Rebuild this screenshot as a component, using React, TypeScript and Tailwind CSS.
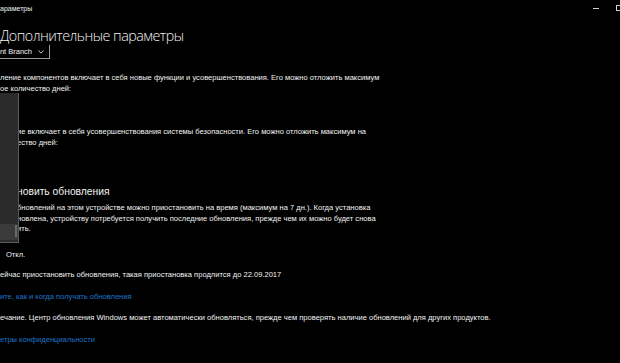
import React from "react";

const font = { fontFamily: '"Liberation Sans", Arial, sans-serif' };
const light = { fontFamily: '"Open Sans", "Noto Sans", sans-serif' };

export default function App() {
  return (
    <div
      className="relative w-[620px] h-[363px] overflow-hidden bg-black text-[#f2f2f2]"
      style={font}
    >
      {/* title bar */}
      <div className="flex h-[16px] items-center justify-between">
        <span className="text-[7px] leading-none">араметры</span>
        <div className="flex items-center gap-[17px]">
          <div className="h-[1px] w-[6px] bg-[#cfcfcf]" />
          <div className="h-[6px] w-[4px] border border-r-0 border-[#cfcfcf]" />
        </div>
      </div>

      {/* page title */}
      <div className="mt-[10px] whitespace-nowrap text-[14.3px] font-light leading-[20px] tracking-[-0.5px]" style={light}>
        Дополнительные параметры
      </div>

      {/* combobox */}
      <div className="mt-[-1px] flex h-[14px] w-[50px] items-center justify-end gap-[6px] whitespace-nowrap border-b border-r border-[#9a9a9a] pr-[5px] text-[7.5px] leading-none">
        <span>ent Branch</span>
        <svg width="6" height="4" viewBox="0 0 6 4" fill="none" className="shrink-0">
          <path d="M0.5 0.5 L3 3.2 L5.5 0.5" stroke="#d8d8d8" strokeWidth="0.9" />
        </svg>
      </div>

      <div className="whitespace-nowrap text-[7.55px] leading-[10.7px]">
        <p className="mt-[14px]">
          ление компонентов включает в себя новые функции и усовершенствования. Его можно отложить максимум
          <br />
          ое количество дней:
        </p>
        <p className="mt-[33px] pl-[17px]">
          ие включает в себя усовершенствования системы безопасности. Его можно отложить максимум на
          <br />
          ество дней:
        </p>
      </div>

      <div className="mt-[36px] whitespace-nowrap pl-[17px] text-[10.3px] leading-[13px]">новить обновления</div>

      <p className="mt-[5px] whitespace-nowrap pl-[17px] text-[7.55px] leading-[10.7px]">
        бновлений на этом устройстве можно приостановить на время (максимум на 7 дн.). Когда установка
        <br />
        новлена, устройству потребуется получить последние обновления, прежде чем их можно будет снова
        <br />
        ить.
      </p>

      <div className="mt-[15px] pl-[6px] text-[7.55px] leading-[10.7px]">Откл.</div>

      <div className="mt-[9px] whitespace-nowrap text-[7.55px] leading-[10.7px]">
        ейчас приостановить обновления, такая приостановка продлится до 22.09.2017
      </div>

      <div className="mt-[12px] whitespace-nowrap text-[7.55px] leading-[10.7px] text-[#1f74c8]">
        ите, как и когда получать обновления
      </div>

      <div className="mt-[10px] whitespace-nowrap text-[7.55px] leading-[10.7px]">
        ечание. Центр обновления Windows может автоматически обновляться, прежде чем проверять наличие обновлений для других продуктов.
      </div>

      <div className="mt-[11px] whitespace-nowrap text-[7.55px] leading-[10.7px] text-[#1f74c8]">
        етры конфиденциальности
      </div>

      {/* dropdown overlay */}
      <div className="absolute left-0 top-[93px] flex h-[150px] w-[19px] flex-col border-r border-b border-[#5c5c5c] bg-[#2b2b2b]">
        <div className="flex-1" />
        <div className="relative mb-[2px] h-[16px] bg-[#3b3b3b]">
          <div className="absolute right-[1px] top-[1px] h-[12px] w-[2px] bg-[#6a6a6a]" />
        </div>
      </div>
    </div>
  );
}
